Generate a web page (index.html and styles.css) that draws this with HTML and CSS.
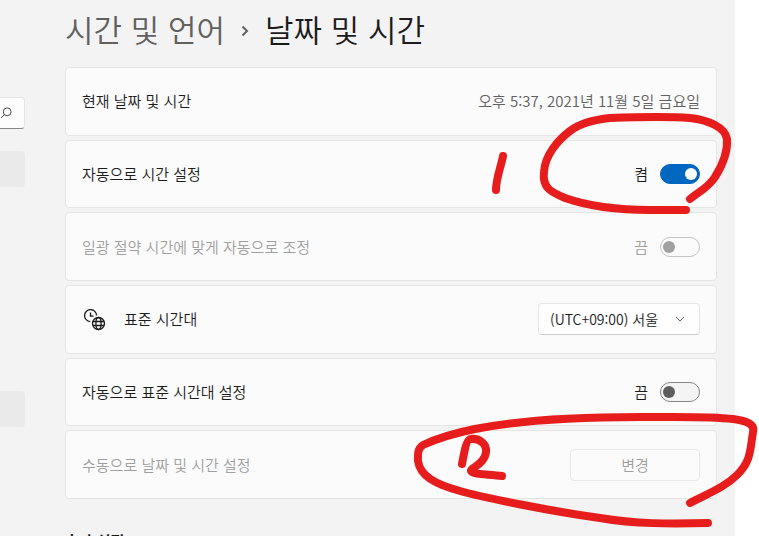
FILE: index.html
```html
<!DOCTYPE html>
<html lang="ko">
<head>
<meta charset="utf-8">
<title>날짜 및 시간</title>
<link rel="stylesheet" href="styles.css">
</head>
<body>
<div class="window">
  <aside class="sidebar">
    <div class="search">
      <input class="search-input" type="search" aria-label="설정 검색">
      <svg class="search-icon" viewBox="0 0 12 12" aria-hidden="true"><circle cx="7.2" cy="4.8" r="3.9"/><path d="M4.4 7.6 1 11"/></svg>
    </div>
    <div class="nav-item"></div>
    <div class="nav-item nav-item-current"></div>
  </aside>
  <main class="content">
    <h1 class="title">
      <a class="crumb" href="#">시간 및 언어</a>
      <svg class="crumb-arrow" viewBox="0 0 8 12" aria-hidden="true"><path d="M1.5 1.5 6 6l-4.500 4.500"/></svg>
      <span>날짜 및 시간</span>
    </h1>
    <div class="cards">
      <section class="card">
        <span class="label">현재 날짜 및 시간</span>
        <span class="value">오후 5:37, 2021년 11월 5일 금요일</span>
      </section>
      <section class="card">
        <label class="label" for="auto-time">자동으로 시간 설정</label>
        <span class="state">켬</span>
        <input class="toggle" type="checkbox" id="auto-time" checked>
      </section>
      <section class="card card-disabled">
        <label class="label" for="dst">일광 절약 시간에 맞게 자동으로 조정</label>
        <span class="state">끔</span>
        <input class="toggle" type="checkbox" id="dst" disabled>
      </section>
      <section class="card">
        <svg class="zone-icon" viewBox="0 0 22 22" aria-hidden="true">
          <path d="M6.200 12.600A6 6 0 1 1 12.600 6.500M6.500 3.500V7.200H9.500"/>
          <circle cx="14.500" cy="14.500" r="6"/>
          <ellipse cx="14.500" cy="14.500" rx="2.600" ry="6"/>
          <path d="M9 12.500H20M9 16.500H20"/>
        </svg>
        <label class="label" for="zone">표준 시간대</label>
        <div class="select-wrap">
          <select class="select" id="zone"><option>(UTC+09:00) 서울</option></select>
          <svg class="select-arrow" viewBox="0 0 10 6" aria-hidden="true"><path d="M1 1l4 4 4-4"/></svg>
        </div>
      </section>
      <section class="card">
        <label class="label" for="auto-zone">자동으로 표준 시간대 설정</label>
        <span class="state">끔</span>
        <input class="toggle" type="checkbox" id="auto-zone">
      </section>
      <section class="card card-disabled">
        <span class="label">수동으로 날짜 및 시간 설정</span>
        <button class="button" type="button" disabled>변경</button>
      </section>
    </div>
    <h2 class="subtitle">추가 설정</h2>
  </main>
  <svg class="marks" viewBox="0 0 359 436" aria-hidden="true">
    <path d="M103 56C101 67 96 78 96 90"/>
    <path d="M290 99C300 91 309 87 315 77C322 66 328 53 327 39C325 27 308 20 290 18C265 16 235 17 210 18C190 20 179 24 170 31C158 40 145 55 144 72C142 88 151 92 165 98C188 106 220 110 250 110H286"/>
    <path d="M62 364C64 354 66 339 71 339C79 338 87 344 86 352C85 364 70 368 71 371C73 375 90 374 102 376"/>
    <path d="M290 403C309 393 325 387 337 375C351 361 350 351 353 332C355 324 347 321 333 319C310 316 275 317 240 317C180 317 120 320 75 329C55 333 38 338 23 345C17 349 18 355 18 361C20 376 35 384 60 391C85 398 150 411 200 418C235 424 270 424 308 423"/>
  </svg>
</div>
</body>
</html>
```
FILE: styles.css
```css
* { box-sizing: border-box; }

body {
  margin: 0;
  height: 100vh;
  overflow: hidden;
  background: #fff;
  color: #1b1b1b;
  font: 350 15px/20px "Noto Sans CJK KR", sans-serif;
}

.window {
  position: relative;
  display: flex;
  gap: 40px;
  min-height: 100vh;
  margin-right: 24px;
  padding-right: 18px;
  background: #f3f3f3;
}

.sidebar { flex: 0 0 25px; padding-top: 97px; }

.search {
  display: flex;
  align-items: center;
  height: 32px;
  margin-bottom: 22px;
  border: 1px solid #e5e5e5;
  border-left: 0;
  border-bottom-color: #868686;
  border-radius: 0 4px 4px 0;
  background: #fdfdfd;
}

.search-input {
  flex: 1;
  min-width: 0;
  width: 0;
  padding: 0;
  border: 0;
  background: none;
  outline: 0;
}

.search-icon {
  width: 12px;
  height: 12px;
  margin-right: 12px;
  fill: none;
  stroke: #4a4a4a;
}

.nav-item {
  height: 36px;
  border-radius: 0 4px 4px 0;
  background: #eaeaea;
}

.nav-item-current { margin-top: 204px; }

.content { flex: 1; min-width: 0; padding-top: 7px; }

.title {
  display: flex;
  align-items: center;
  height: 44px;
  margin: 0 0 16px;
  font-size: 31px;
  font-weight: 350;
  line-height: 44px;
}

.crumb { color: #606060; text-decoration: none; }

.crumb-arrow {
  width: 8px;
  height: 12px;
  margin: 3px 16px 0;
  fill: none;
  stroke: #606060;
  stroke-width: 2;
}

.cards {
  display: grid;
  grid-auto-rows: 1fr;
  gap: 4px;
  min-height: 432px;
}

.card {
  display: flex;
  align-items: center;
  padding: 0 16px;
  border: 1px solid #e5e5e5;
  border-radius: 4px;
  background: #fbfbfb;
}

.card-disabled { color: #9f9f9f; }
.label { flex: 1; }
.value { color: #606060; }
.state { margin-right: 12px; }

.toggle {
  appearance: none;
  display: flex;
  align-items: center;
  width: 40px;
  height: 20px;
  margin: 0;
  padding: 0 2px;
  border: 1px solid #868686;
  border-radius: 10px;
  background: #f4f4f4;
}

.toggle::before {
  content: "";
  width: 12px;
  height: 12px;
  border-radius: 50%;
  background: #5e5e5e;
}

.toggle:checked {
  justify-content: flex-end;
  border-color: #0067c0;
  background: #0067c0;
}

.toggle:checked::before { background: #fff; }
.toggle:disabled { border-color: #c4c4c4; background: #fbfbfb; }
.toggle:disabled::before { background: #a0a0a0; }

.zone-icon {
  width: 22px;
  height: 22px;
  margin: 2px 18px 0 2px;
  fill: none;
  stroke: #1b1b1b;
  stroke-width: 1.3;
}

.select-wrap { position: relative; }

.select {
  appearance: none;
  display: block;
  width: 162px;
  height: 32px;
  padding: 0 11px;
  border: 1px solid #e5e5e5;
  border-bottom-color: #ccc;
  border-radius: 4px;
  background: #fefefe;
  color: inherit;
  font: inherit;
  font-size: 14px;
}

.select-arrow {
  position: absolute;
  top: 13px;
  right: 15px;
  width: 10px;
  height: 6px;
  fill: none;
  stroke: #606060;
  pointer-events: none;
}

.button {
  width: 130px;
  height: 32px;
  border: 1px solid #e9e9e9;
  border-radius: 4px;
  background: #fbfbfb;
  color: #9f9f9f;
  font: inherit;
}

.subtitle {
  margin: 32px 0 0;
  font-size: 15px;
  font-weight: 700;
  line-height: 20px;
}

.marks {
  position: absolute;
  top: 100px;
  right: -24px;
  width: 359px;
  height: 436px;
  fill: none;
  stroke: #e71d1d;
  stroke-width: 8;
  stroke-linecap: round;
  stroke-linejoin: round;
  pointer-events: none;
}
```
